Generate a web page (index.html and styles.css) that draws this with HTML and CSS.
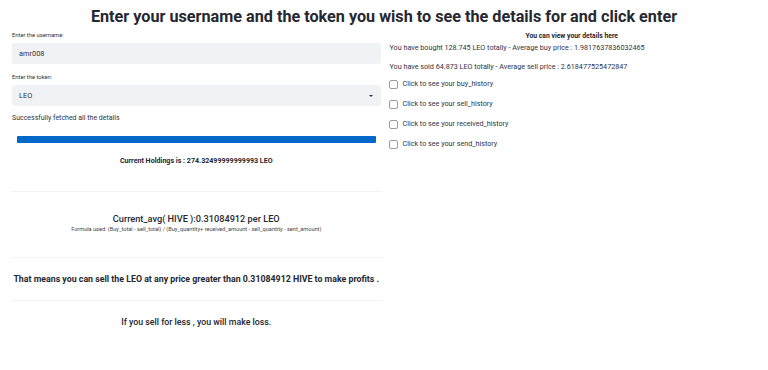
FILE: index.html
```html
<!DOCTYPE html>
<html>
<head>
<meta charset="utf-8">
<link rel="stylesheet" href="styles.css">
</head>
<body>
<h1 class="title">Enter your username and the token you wish to see the details for and click enter</h1>
<div class="cols">
  <div class="left">
    <div class="label">Enter the username:</div>
    <div class="field">amr008</div>
    <div class="label label2">Enter the token:</div>
    <div class="field select"><span>LEO</span><span class="caret"></span></div>
    <div class="success">Successfully fetched all the details</div>
    <div class="progress"></div>
    <div class="holdings">Current Holdings is : 274.32499999999993 LEO</div>
    <hr class="divider d1">
    <div class="avg">Current_avg( HIVE ):0.31084912 per LEO</div>
    <div class="formula">Formula used: (Buy_total - sell_total) / (Buy_quantity+ received_amount - sell_quantity - sent_amount)</div>
    <hr class="divider d2">
    <div class="means">That means you can sell the LEO at any price greater than 0.31084912 HIVE to make profits .</div>
    <hr class="divider d3">
    <div class="loss">If you sell for less , you will make loss.</div>
  </div>
  <div class="right">
    <div class="rhead">You can view your details here</div>
    <div class="rline r1">You have bought 128.745 LEO totally - Average buy price : 1.9817637836032465</div>
    <div class="rline r2">You have sold 64.873 LEO totally - Average sell price : 2.618477525472847</div>
    <div class="checks">
      <div class="check"><span class="box"></span><span>Click to see your buy_history</span></div>
      <div class="check"><span class="box"></span><span>Click to see your sell_history</span></div>
      <div class="check"><span class="box"></span><span>Click to see your received_history</span></div>
      <div class="check"><span class="box"></span><span>Click to see your send_history</span></div>
    </div>
  </div>
</div>
</body>
</html>
```
FILE: styles.css
```css
* { box-sizing: border-box; }
body {
  margin: 0;
  background: #ffffff;
  color: #262730;
  font-family: Roboto, "Liberation Sans", sans-serif;
}
.title {
  margin: 0;
  padding-top: 6px;
  height: 28px;
  font-size: 16.2px;
  line-height: 22px;
  font-weight: 700;
  text-align: center;
  color: #262730;
}
.cols {
  display: grid;
  grid-template-columns: minmax(0, 1fr) minmax(0, 1fr);
  gap: 7px;
  padding: 0 12px;
}
.left, .right { display: flex; flex-direction: column; min-width: 0; }
.label {
  font-size: 5.8px;
  line-height: 10px;
  margin-top: 2px;
  color: #31333f;
}
.label2 { margin-top: 8px; }
.field {
  margin-top: 3px;
  height: 21px;
  background: #f0f2f6;
  border-radius: 3px;
  font-size: 7.4px;
  line-height: 21px;
  padding: 0 7px;
  color: #31333f;
}
.select { display: flex; justify-content: space-between; align-items: center; }
.caret {
  width: 0; height: 0;
  border-left: 2px solid transparent;
  border-right: 2px solid transparent;
  border-top: 2px solid #31333f;
  margin-right: 1px;
}
.success {
  margin-top: 6px;
  font-size: 7px;
  line-height: 12px;
  color: #31333f;
}
.progress {
  margin: 12px 5px 0;
  height: 7px;
  background: #0068c9;
  border-radius: 1px;
}
.holdings {
  margin-top: 12px;
  font-size: 7.1px;
  line-height: 12px;
  font-weight: 700;
  text-align: center;
}
.divider {
  border: 0;
  height: 1px;
  background: #f3f3f5;
  margin: 0 -1px;
}
.d1 { margin-top: 24px; }
.avg {
  margin-top: 20px;
  font-size: 9.2px;
  line-height: 14px;
  text-align: center;
  font-weight: 500;
}
.formula {
  font-size: 5.6px;
  line-height: 6px;
  text-align: center;
  color: #444;
}
.d2 { margin-top: 25px; }
.means {
  margin-top: 15px;
  font-size: 8.8px;
  line-height: 12px;
  font-weight: 700;
  text-align: center;
  white-space: nowrap;
}
.d3 { margin-top: 15px; }
.loss {
  margin-top: 15px;
  font-size: 8.8px;
  line-height: 12px;
  font-weight: 500;
  text-align: center;
}
.rhead {
  margin-top: 3px;
  font-size: 6.8px;
  line-height: 10px;
  font-weight: 700;
  text-align: center;
}
.rline {
  font-size: 7.2px;
  line-height: 12px;
  color: #31333f;
  margin-left: 2px;
}
.r1 { margin-top: 1px; }
.r2 { margin-top: 7px; }
.checks { display: flex; flex-direction: column; gap: 8px; margin-top: 5px; }
.check {
  display: flex;
  align-items: center;
  gap: 5px;
  font-size: 7.2px;
  line-height: 12px;
  color: #31333f;
  margin-left: 1px;
}
.box {
  width: 9px; height: 9px;
  border: 1px solid #9a9ba3;
  border-radius: 2px;
  background: #fff;
}
```
